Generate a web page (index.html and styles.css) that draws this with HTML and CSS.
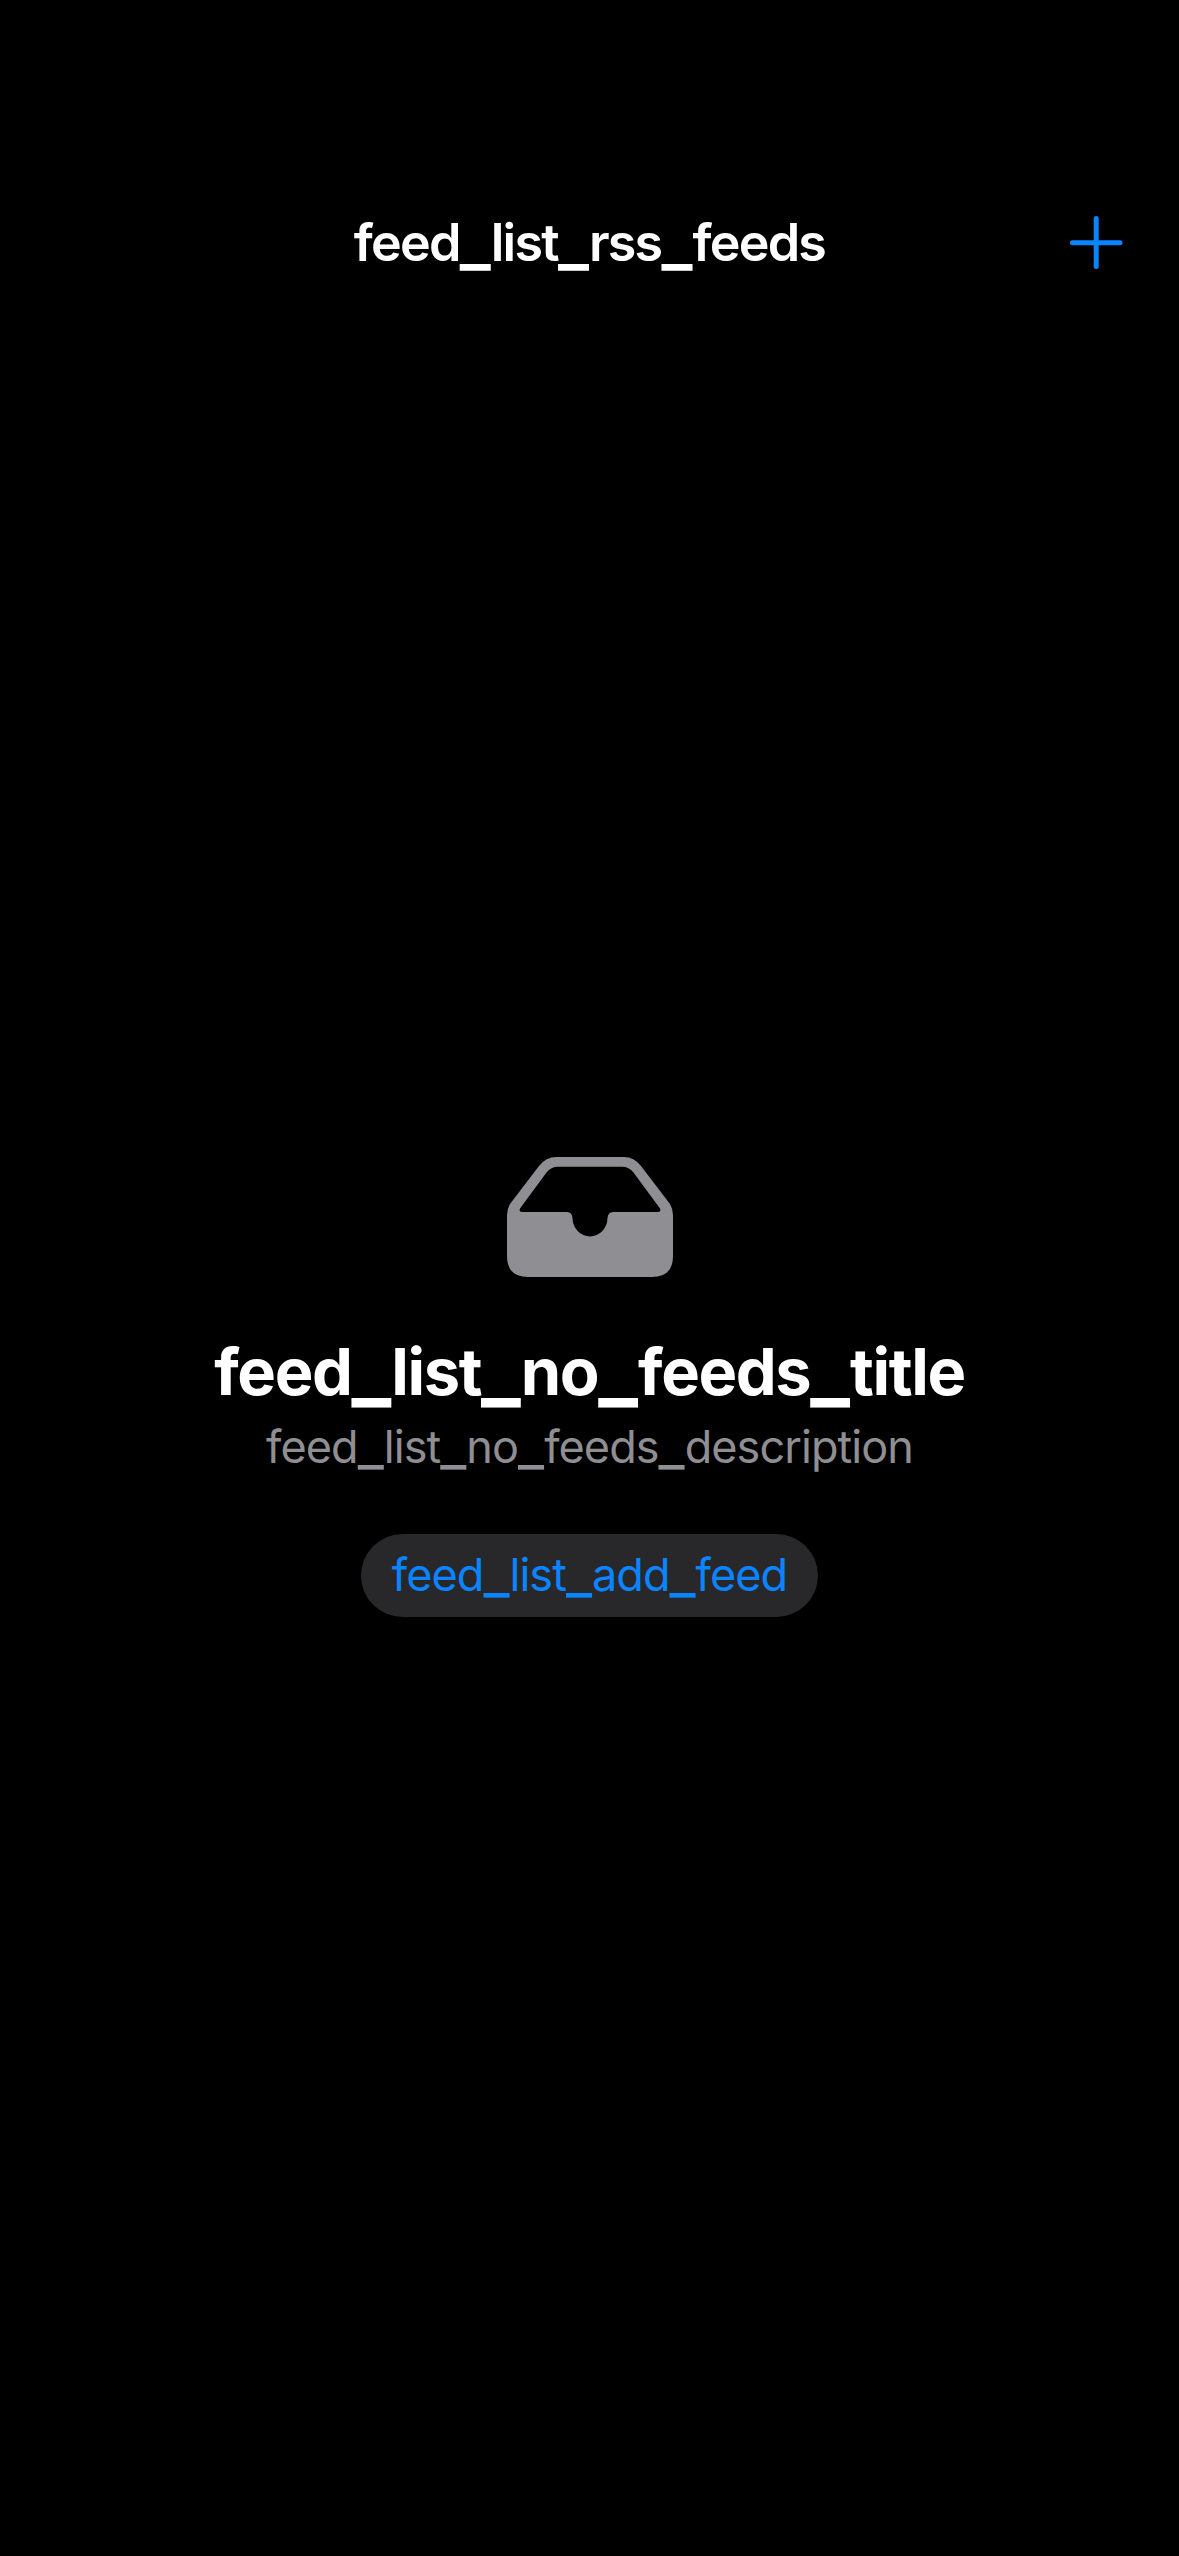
FILE: index.html
```html
<!DOCTYPE html>
<html lang="en">
<head>
<meta charset="utf-8">
<title>Feeds</title>
<link rel="stylesheet" href="styles.css">
</head>
<body>
<header class="navbar">
  <h1 class="navbar-title">feed<span class="bar">_</span>list<span class="bar">_</span>rss<span class="bar">_</span>feeds</h1>
  <button class="add-button" aria-label="Add">
    <svg class="plus-icon" viewBox="0 0 53 53"><path d="M26.2 2.500V50.500M2.500 26.700H50"/></svg>
  </button>
</header>
<main class="empty-state">
  <svg class="tray-icon" viewBox="0 0 166 120">
    <path fill-rule="evenodd" d="M49 0H117Q127 0 134 9L163 47Q166 52 166 58V99Q166 120 145 120H21Q0 120 0 99V58Q0 52 3 47L32 9Q39 0 49 0ZM51 9.700Q44 9.700 39.500 15.500L13 51.500Q11.500 55 15 55H60Q65 55 65.500 61A17.500 18.500 0 0 0 100.500 61Q101 55 106 55H151Q154.500 55 153 51.500L126.500 15.500Q122 9.700 115 9.700Z"/>
  </svg>
  <h2 class="empty-title">feed<span class="bar">_</span>list<span class="bar">_</span>no<span class="bar">_</span>feeds<span class="bar">_</span>title</h2>
  <p class="empty-description">feed<span class="bar">_</span>list<span class="bar">_</span>no<span class="bar">_</span>feeds<span class="bar">_</span>description</p>
  <button class="feed-button">feed<span class="bar">_</span>list<span class="bar">_</span>add<span class="bar">_</span>feed</button>
</main>
</body>
</html>
```
FILE: styles.css
```css
* { box-sizing: border-box; }
body {
  margin: 0;
  min-height: 2556px;
  background: #000;
  font-family: Inter, "Liberation Sans", sans-serif;
}
h1, h2, p { margin: 0; white-space: nowrap; }
button { border: 0; padding: 0; font: inherit; }
.bar {
  font-size: 1.27em;
  line-height: 0;
  letter-spacing: 0;
  vertical-align: -2px;
}
.navbar {
  display: grid;
  grid-template-columns: 1fr auto 1fr;
  align-items: center;
  height: 131px;
  margin-top: 177px;
  padding: 0 56px;
}
.navbar-title {
  grid-column: 2;
  padding-top: 1px;
  color: #fff;
  font-size: 52px;
  font-weight: 600;
  line-height: 66px;
  letter-spacing: -1.75px;
}
.navbar-title .bar { vertical-align: -3px; }
.add-button {
  justify-self: end;
  background: none;
  line-height: 0;
}
.plus-icon {
  width: 53px;
  height: 53px;
  fill: none;
  stroke: #0a84ff;
  stroke-width: 5;
  stroke-linecap: round;
}
.empty-state {
  display: flex;
  flex-direction: column;
  align-items: center;
  padding-top: 849px;
}
.tray-icon { width: 166px; height: 120px; fill: #8e8e93; }
.empty-title {
  margin-top: 53px;
  color: #fff;
  font-size: 65px;
  font-weight: 700;
  line-height: 84px;
  letter-spacing: -1.42px;
}
.empty-title .bar {
  font-size: 1.285em;
  vertical-align: -3px;
}
.empty-description {
  margin-top: 3px;
  color: #8e8e93;
  font-size: 45px;
  line-height: 60px;
  letter-spacing: -0.93px;
}
.feed-button {
  width: 457px;
  height: 83px;
  margin-top: 57px;
  padding-bottom: 2px;
  border-radius: 42px;
  background: #28282a;
  color: #0a84ff;
  font-size: 45px;
  letter-spacing: -0.95px;
}
```
